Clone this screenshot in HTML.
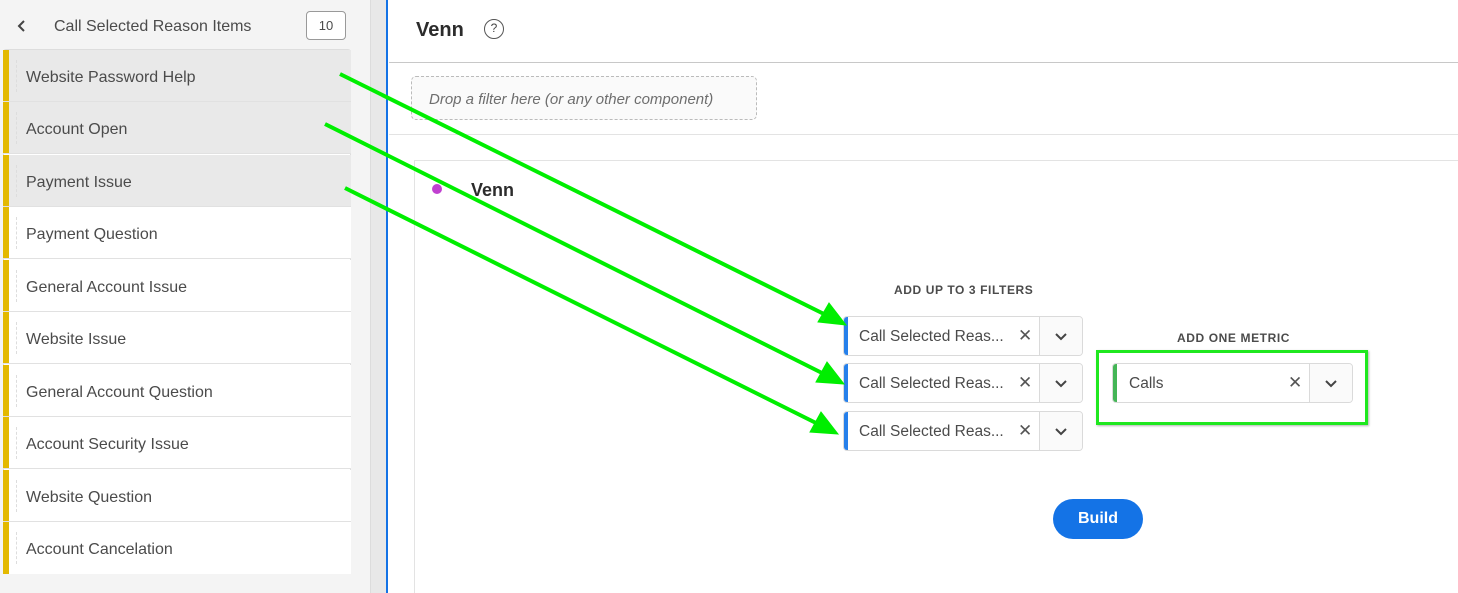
<!DOCTYPE html>
<html><head><style>
*{box-sizing:border-box;margin:0;padding:0}
body{width:1458px;height:593px;overflow:hidden;background:#fff;font-family:"Liberation Sans",sans-serif;position:relative;color:#4b4b4b}
.abs{position:absolute}
.row{position:absolute;left:3px;width:348px;height:52px;border-bottom:1px solid #e1e1e1;font-size:16px;color:#4b4b4b;padding-left:23px;line-height:55px}
.row:before{content:"";position:absolute;left:0;top:0;width:6px;height:100%;background:#e3b900}
.row:after{content:"";position:absolute;left:13px;top:10px;height:32px;border-left:1px dashed #ddd}
.f{position:absolute;height:40px;border:1px solid #dadada;border-radius:4px;background:#fff;font-size:15.5px;color:#4b4b4b;line-height:40px;overflow:hidden}
.f .bar{position:absolute;left:0;top:0;bottom:0;width:4px}
.f .x{position:absolute;font-size:17px;color:#555;line-height:38px}
.f .dd{position:absolute;top:0;bottom:0;border-left:1px solid #dadada;background:#fafafa}
.lbl{position:absolute;font-size:12px;font-weight:bold;letter-spacing:.6px;color:#4b4b4b}
</style></head><body>
<div class="abs" style="left:0;top:0;width:370px;height:593px;background:#f4f4f4"></div>
<div class="abs" style="left:370px;top:0;width:17px;height:593px;background:#e8e8e8;border-left:1px solid #dcdcdc"></div>
<div class="abs" style="left:386px;top:0;width:2px;height:593px;background:#1473e6"></div>
<svg class="abs" style="left:15px;top:18px" width="14" height="16"><path d="M9 3 L4 8 L9 13" stroke="#444" stroke-width="2" fill="none"/></svg>
<div class="abs" style="left:54px;top:18px;font-size:16px;color:#4b4b4b">Call Selected Reason Items</div>
<div class="abs" style="left:306px;top:11px;width:40px;height:29px;border:1px solid #999;border-radius:4px;font-size:13px;text-align:center;line-height:27px;background:#fff">10</div>
<div class="abs" style="left:3px;top:49px;width:348px;height:525px;border:1px solid #ddd;border-radius:3px;background:#fff"></div>
<div class="row" style="top:50px;background:#e9e9e9">Website Password Help</div>
<div class="row" style="top:102px;background:#e9e9e9">Account Open</div>
<div class="row" style="top:155px;background:#e9e9e9">Payment Issue</div>
<div class="row" style="top:207px;background:#fff">Payment Question</div>
<div class="row" style="top:260px;background:#fff">General Account Issue</div>
<div class="row" style="top:312px;background:#fff">Website Issue</div>
<div class="row" style="top:365px;background:#fff">General Account Question</div>
<div class="row" style="top:417px;background:#fff">Account Security Issue</div>
<div class="row" style="top:470px;background:#fff">Website Question</div>
<div class="row" style="top:522px;background:#fff;border-bottom:none">Account Cancelation</div>

<div class="abs" style="left:416px;top:19px;font-size:20px;font-weight:bold;color:#2c2c2c">Venn</div>
<div class="abs" style="left:484px;top:19px;width:20px;height:20px;border:1.5px solid #555;border-radius:50%;font-size:12px;text-align:center;line-height:17px;color:#444">?</div>
<div class="abs" style="left:389px;top:62px;width:1069px;height:1px;background:#c8c8c8"></div>
<div class="abs" style="left:411px;top:76px;width:346px;height:44px;border:1px dashed #bbb;border-radius:5px;background:#fafafa;font-style:italic;font-size:15px;color:#6e6e6e;padding-left:17px;line-height:46px">Drop a filter here (or any other component)</div>
<div class="abs" style="left:389px;top:134px;width:1069px;height:1px;background:#e3e3e3"></div>
<div class="abs" style="left:414px;top:160px;width:1044px;height:433px;border-left:1px solid #e3e3e3;border-top:1px solid #e3e3e3"></div>
<div class="abs" style="left:432px;top:184px;width:10px;height:10px;border-radius:50%;background:#c040d0"></div>
<div class="abs" style="left:471px;top:180px;font-size:18px;font-weight:bold;color:#2c2c2c">Venn</div>

<div class="lbl" style="left:894px;top:283px">ADD UP TO 3 FILTERS</div>
<div class="f" style="left:843px;top:316px;width:240px"><div class="bar" style="background:#2680eb"></div><span style="position:absolute;left:15px">Call Selected Reas...</span><span class="x" style="left:174px">✕</span><div class="dd" style="left:195px;right:0"><svg style="position:absolute;left:14px;top:15px" width="14" height="10"><path d="M2 2 L7 7 L12 2" stroke="#444" stroke-width="2" fill="none"/></svg></div></div>
<div class="f" style="left:843px;top:363px;width:240px"><div class="bar" style="background:#2680eb"></div><span style="position:absolute;left:15px">Call Selected Reas...</span><span class="x" style="left:174px">✕</span><div class="dd" style="left:195px;right:0"><svg style="position:absolute;left:14px;top:15px" width="14" height="10"><path d="M2 2 L7 7 L12 2" stroke="#444" stroke-width="2" fill="none"/></svg></div></div>
<div class="f" style="left:843px;top:411px;width:240px"><div class="bar" style="background:#2680eb"></div><span style="position:absolute;left:15px">Call Selected Reas...</span><span class="x" style="left:174px">✕</span><div class="dd" style="left:195px;right:0"><svg style="position:absolute;left:14px;top:15px" width="14" height="10"><path d="M2 2 L7 7 L12 2" stroke="#444" stroke-width="2" fill="none"/></svg></div></div>

<div class="lbl" style="left:1177px;top:331px">ADD ONE METRIC</div>
<div class="f" style="left:1112px;top:363px;width:241px"><div class="bar" style="background:#44b556"></div><span style="position:absolute;left:16px">Calls</span><span class="x" style="left:175px">✕</span><div class="dd" style="left:196px;right:0"><svg style="position:absolute;left:14px;top:15px" width="14" height="10"><path d="M2 2 L7 7 L12 2" stroke="#444" stroke-width="2" fill="none"/></svg></div></div>
<div class="abs" style="left:1096px;top:350px;width:272px;height:75px;border:3px solid #1fe81f;box-shadow:1px 1px 2px rgba(0,0,0,.3)"></div>

<div class="abs" style="left:1053px;top:499px;width:90px;height:40px;border-radius:20px;background:#1473e6;color:#fff;font-weight:bold;font-size:16px;text-align:center;line-height:40px">Build</div>

<svg class="abs" style="left:0;top:0" width="1458" height="593">
<g stroke="#00ee00" stroke-width="4" fill="#00ee00">
<line x1="340" y1="74" x2="828" y2="316"/>
<line x1="325" y1="124" x2="826" y2="375"/>
<line x1="345" y1="188" x2="820" y2="425"/>
<polygon stroke-width="1" points="846,325 818,322 829,303"/>
<polygon stroke-width="1" points="844,384 816,382 827,362"/>
<polygon stroke-width="1" points="838,434 810,432 821,412"/>
</g>
</svg>
</body></html>
